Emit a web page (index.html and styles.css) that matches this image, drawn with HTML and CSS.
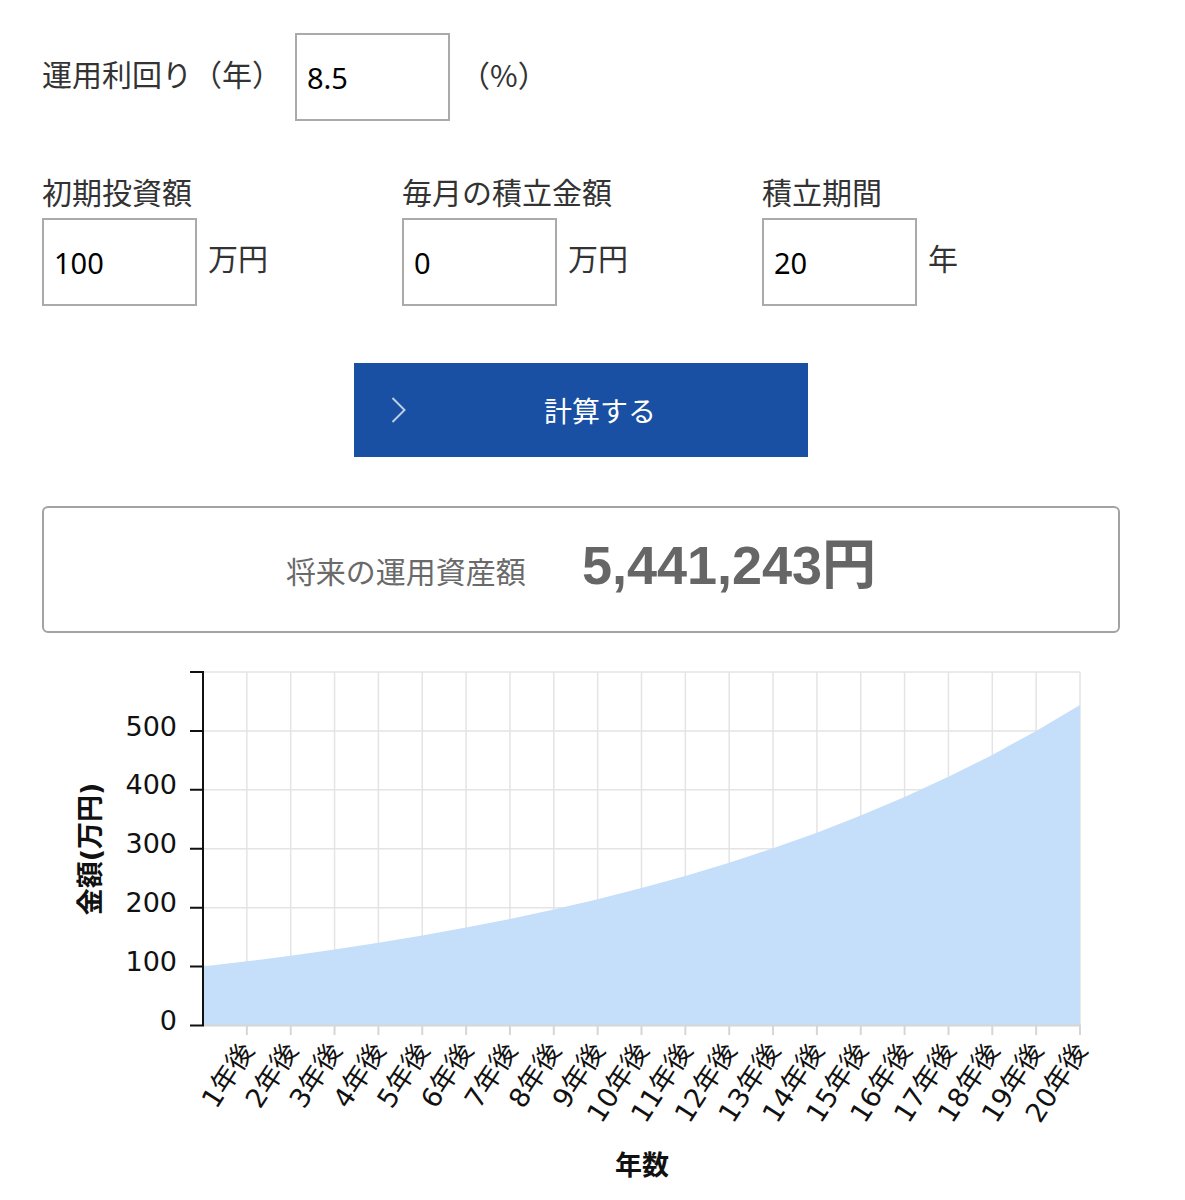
FILE: index.html
```html
<!DOCTYPE html>
<html lang="ja">
<head>
<meta charset="utf-8">
<title>積立シミュレーション</title>
<link rel="stylesheet" href="styles.css">
</head>
<body>
<div class="page">
  <div class="row-rate">
    <label class="label">運用利回り（年）</label>
    <input class="field field-rate" value="8.5">
    <span class="unit">（%）</span>
  </div>

  <div class="grid">
    <div class="col">
      <div class="label">初期投資額</div>
      <div class="field-row"><input class="field" value="100"><span class="unit">万円</span></div>
    </div>
    <div class="col">
      <div class="label">毎月の積立金額</div>
      <div class="field-row"><input class="field" value="0"><span class="unit">万円</span></div>
    </div>
    <div class="col">
      <div class="label">積立期間</div>
      <div class="field-row"><input class="field" value="20"><span class="unit">年</span></div>
    </div>
  </div>

  <div class="btn-wrap">
    <button class="calc" type="button">
      <svg class="chev" width="15" height="28" viewBox="0 0 15 28"><polyline points="1.5,2 13.5,14 1.5,26" /></svg>
      <span class="calc-text">計算する</span>
    </button>
  </div>

  <div class="result">
    <span class="result-label">将来の運用資産額</span>
    <span class="result-amount">5,441,243円</span>
  </div>

  <svg class="chart" width="1078" height="550" viewBox="42 650 1078 550">
    <path class="grid-line" d="M203 672H1080 M203 730.92H1080 M203 789.83H1080 M203 848.75H1080 M203 907.67H1080 M203 966.58H1080
      M246.85 672V1025.5 M290.7 672V1025.5 M334.55 672V1025.5 M378.4 672V1025.5 M422.25 672V1025.5 M466.1 672V1025.5 M509.95 672V1025.5 M553.8 672V1025.5 M597.65 672V1025.5 M641.5 672V1025.5
      M685.35 672V1025.5 M729.2 672V1025.5 M773.05 672V1025.5 M816.9 672V1025.5 M860.75 672V1025.5 M904.6 672V1025.5 M948.45 672V1025.5 M992.3 672V1025.5 M1036.15 672V1025.5 M1080 672V1025.5"/>
    <polygon class="area" points="203,966.58 246.85,961.37 290.7,955.71 334.55,949.54 378.4,942.82 422.25,935.52 466.1,927.56 509.95,918.91 553.8,909.48 597.65,899.23 641.5,888.07 685.35,875.92 729.2,862.70 773.05,848.31 816.9,832.65 860.75,815.60 904.6,797.04 948.45,776.85 992.3,754.88 1036.15,730.95 1080,704.92 1080,1025.5 203,1025.5"/>
    <path class="x-axis" d="M203 1025.5H1081
      M246.85 1025.5V1035 M290.7 1025.5V1035 M334.55 1025.5V1035 M378.4 1025.5V1035 M422.25 1025.5V1035 M466.1 1025.5V1035 M509.95 1025.5V1035 M553.8 1025.5V1035 M597.65 1025.5V1035 M641.5 1025.5V1035
      M685.35 1025.5V1035 M729.2 1025.5V1035 M773.05 1025.5V1035 M816.9 1025.5V1035 M860.75 1025.5V1035 M904.6 1025.5V1035 M948.45 1025.5V1035 M992.3 1025.5V1035 M1036.15 1025.5V1035 M1080 1025.5V1035"/>
    <path class="y-axis" d="M203 671V1026.5 M190 672H203 M190 730.92H203 M190 789.83H203 M190 848.75H203 M190 907.67H203 M190 966.58H203 M190 1025.5H203"/>

    <g class="y-labels">
      <text x="177" y="730.92" dy="0.17em">500</text>
      <text x="177" y="789.83" dy="0.17em">400</text>
      <text x="177" y="848.75" dy="0.17em">300</text>
      <text x="177" y="907.67" dy="0.17em">200</text>
      <text x="177" y="966.58" dy="0.17em">100</text>
      <text x="177" y="1025.5" dy="0.17em">0</text>
    </g>

    <text class="axis-title" transform="translate(90,849) rotate(-90)" dy="0.36em">金額(万円)</text>
    <text class="axis-title" x="642" y="1165" dy="0.36em">年数</text>

    <g class="x-labels">
      <text transform="translate(246.85,1045) rotate(-57)" dy="0.36em">1年後</text>
      <text transform="translate(290.7,1045) rotate(-57)" dy="0.36em">2年後</text>
      <text transform="translate(334.55,1045) rotate(-57)" dy="0.36em">3年後</text>
      <text transform="translate(378.4,1045) rotate(-57)" dy="0.36em">4年後</text>
      <text transform="translate(422.25,1045) rotate(-57)" dy="0.36em">5年後</text>
      <text transform="translate(466.1,1045) rotate(-57)" dy="0.36em">6年後</text>
      <text transform="translate(509.95,1045) rotate(-57)" dy="0.36em">7年後</text>
      <text transform="translate(553.8,1045) rotate(-57)" dy="0.36em">8年後</text>
      <text transform="translate(597.65,1045) rotate(-57)" dy="0.36em">9年後</text>
      <text transform="translate(641.5,1045) rotate(-57)" dy="0.36em">10年後</text>
      <text transform="translate(685.35,1045) rotate(-57)" dy="0.36em">11年後</text>
      <text transform="translate(729.2,1045) rotate(-57)" dy="0.36em">12年後</text>
      <text transform="translate(773.05,1045) rotate(-57)" dy="0.36em">13年後</text>
      <text transform="translate(816.9,1045) rotate(-57)" dy="0.36em">14年後</text>
      <text transform="translate(860.75,1045) rotate(-57)" dy="0.36em">15年後</text>
      <text transform="translate(904.6,1045) rotate(-57)" dy="0.36em">16年後</text>
      <text transform="translate(948.45,1045) rotate(-57)" dy="0.36em">17年後</text>
      <text transform="translate(992.3,1045) rotate(-57)" dy="0.36em">18年後</text>
      <text transform="translate(1036.15,1045) rotate(-57)" dy="0.36em">19年後</text>
      <text transform="translate(1080,1045) rotate(-57)" dy="0.36em">20年後</text>
    </g>
  </svg>
</div>
</body>
</html>
```

FILE: styles.css
```css
html, body {
  margin: 0;
  padding: 0;
  background: #ffffff;
}

body {
  font-family: "Noto Sans CJK JP", sans-serif;
  color: #333333;
}

.page {
  width: 1078px;
  padding: 33px 0 0 42px;
}

.row-rate {
  display: flex;
  align-items: flex-start;
  height: 88px;
}

.row-rate .label {
  margin-top: 25px;
}

.row-rate .unit {
  margin-top: 26px;
}

.label {
  font-size: 30px;
  line-height: 30px;
  white-space: nowrap;
}

.field {
  box-sizing: border-box;
  width: 155px;
  height: 88px;
  margin: 0;
  padding: 0 10px;
  border: 2px solid #aaaaaa;
  border-radius: 0;
  background: #ffffff;
  color: #000000;
  font-family: "Noto Sans", sans-serif;
  font-size: 29px;
  outline: none;
}

.field-rate {
  margin-left: 13px;
}

.unit {
  font-size: 30px;
  line-height: 30px;
  margin-left: 10px;
  white-space: nowrap;
}

.grid {
  display: grid;
  grid-template-columns: 360px 360px 358px;
  margin-top: 55px;
}

.grid .label {
  margin-bottom: 12px;
}

.field-row {
  display: flex;
  align-items: flex-start;
}

.field-row .unit {
  margin-top: 24px;
  margin-left: 11px;
}

.btn-wrap {
  display: flex;
  justify-content: center;
  margin-top: 57px;
}

.calc {
  box-sizing: border-box;
  width: 454px;
  height: 94px;
  display: flex;
  align-items: center;
  padding: 0 14px 0 37px;
  border: 0;
  border-radius: 0;
  background: #1950a3;
  color: #ffffff;
  font-family: "Noto Sans CJK JP", sans-serif;
  font-size: 28px;
  cursor: pointer;
}

.chev {
  flex: none;
  display: block;
}

.chev polyline {
  fill: none;
  stroke: rgba(255, 255, 255, 0.72);
  stroke-width: 2;
}

.calc-text {
  flex: 1;
  text-align: center;
}

.result {
  box-sizing: border-box;
  height: 127px;
  margin-top: 49px;
  border: 2px solid #a3a3a3;
  border-radius: 6px;
  display: flex;
  align-items: center;
  justify-content: center;
  gap: 56px;
}

.result-label {
  font-size: 30px;
  line-height: 30px;
  color: #6a6a6a;
}

.result-amount {
  font-family: "Liberation Sans", "Noto Sans CJK JP", sans-serif;
  font-weight: 700;
  font-size: 54px;
  line-height: 1;
  margin-bottom: 10px;
  color: #666666;
}

.chart {
  display: block;
  margin-top: 17px;
  font-family: "DejaVu Sans", "Noto Sans CJK JP", sans-serif;
}

.grid-line {
  fill: none;
  stroke: #e4e4e4;
  stroke-width: 1.5;
}

.area {
  fill: #c5defa;
  stroke: none;
}

.x-axis {
  fill: none;
  stroke: #d6d6d6;
  stroke-width: 2;
}

.y-axis {
  fill: none;
  stroke: #111111;
  stroke-width: 2;
}

.y-labels text {
  font-size: 27px;
  fill: #111111;
  text-anchor: end;
}

.x-labels text {
  font-size: 27px;
  fill: #111111;
  text-anchor: end;
}

.axis-title {
  font-size: 27px;
  font-weight: 700;
  fill: #111111;
  text-anchor: middle;
}
```
